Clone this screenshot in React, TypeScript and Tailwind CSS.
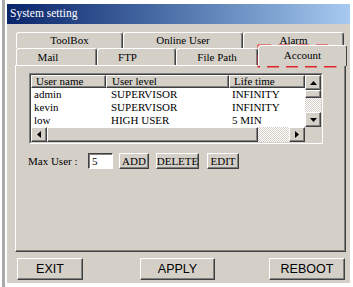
import React from "react";

const serif = "font-['Liberation_Serif',serif]";
const raised =
  "border border-t-white border-l-white border-r-[#404040] border-b-[#404040] shadow-[inset_-1px_-1px_0_#808080]";
const dither =
  "bg-[image:repeating-conic-gradient(#d4d0c8_0_25%,#ffffff_0_50%)] bg-[length:2px_2px]";

type Dir = "up" | "down" | "left" | "right";

function Arrow({ dir }: { dir: Dir }) {
  const vertical = dir === "up" || dir === "down";
  const pts = {
    up: "0,4 7,4 3.5,0",
    down: "0,0 7,0 3.5,4",
    left: "4,0 4,7 0,3.5",
    right: "0,0 0,7 4,3.5",
  }[dir];
  return (
    <svg width={vertical ? 7 : 4} height={vertical ? 4 : 7} viewBox={vertical ? "0 0 7 4" : "0 0 4 7"}>
      <polygon points={pts} fill="#000" />
    </svg>
  );
}

function ScrollBtn({ dir, className }: { dir: Dir; className: string }) {
  return (
    <div className={`flex items-center justify-center bg-[#d4d0c8] ${raised} ${className}`}>
      <Arrow dir={dir} />
    </div>
  );
}

function Tab({ label, className }: { label: string; className: string }) {
  return (
    <div
      className={`flex h-full items-center justify-center rounded-t-[3px] border-t border-l border-r border-t-white border-l-white border-r-[#404040] shadow-[inset_-1px_0_0_#808080] text-[11px] ${className}`}
    >
      {label}
    </div>
  );
}

function Btn({ label, className }: { label: string; className: string }) {
  return (
    <div className={`flex items-center justify-center bg-[#d4d0c8] ${raised} ${className}`}>{label}</div>
  );
}

const users = [
  { name: "admin", level: "SUPERVISOR", life: "INFINITY" },
  { name: "kevin", level: "SUPERVISOR", life: "INFINITY" },
  { name: "low", level: "HIGH USER", life: "5 MIN" },
];

export default function App() {
  return (
    <div className={`relative flex h-[287px] w-[353px] overflow-hidden bg-white text-black ${serif}`}>
      <div className="ml-[2px] w-[3px] bg-[#a9a9a9]" />
      <div className="ml-[2px] mt-[4px] flex h-[279px] w-[343px] flex-col bg-[#d4d0c8]">
        {/* title bar */}
        <div className="flex h-[20px] items-center bg-gradient-to-r from-[#0a246a] to-[#a6caf0] pl-[3px] text-[11.5px] text-white">
          System setting
        </div>

        <div className="pl-[8px]">
          {/* tabs */}
          <div className="mt-[8px]">
            <div className="ml-[1px] flex h-[16px]">
              <Tab label="ToolBox" className="w-[107px]" />
              <Tab label="Online User" className="w-[120px]" />
              <Tab label="Alarm" className="w-[101px]" />
            </div>
            <div className="ml-[1px] flex h-[17px] items-start">
              <Tab label="Mail" className="w-[81px] pr-[17px]" />
              <Tab label="FTP" className="w-[79px] pr-[18px]" />
              <Tab label="File Path" className="w-[82px]" />
              <div className="relative z-10 -mt-[3px] flex h-[21px] w-[89px] items-center justify-center rounded-t-[3px] border-t border-l border-r border-t-white border-l-white border-r-[#404040] bg-[#d4d0c8] pb-[2px] text-[11px]">
                Account
              </div>
            </div>
          </div>

          {/* panel */}
          <div className="h-[187px] w-[331px] border border-t-white border-l-white border-r-[#404040] border-b-[#404040] shadow-[inset_-1px_-1px_0_#808080]">
            <div className="ml-[13px] mt-[7px] h-[71px] w-[294px] border border-t-[#808080] border-l-[#808080] border-r-white border-b-white">
              <div className="grid h-full w-full grid-cols-[1fr_16px] grid-rows-[1fr_15px] border border-t-[#404040] border-l-[#404040] border-r-[#d4d0c8] border-b-[#d4d0c8] bg-white text-[11px]">
                <div className="flex flex-col">
                  <div className="flex h-[13px]">
                    <div className={`flex w-[75px] items-center bg-[#d4d0c8] pl-[4px] ${raised}`}>User name</div>
                    <div className={`flex w-[123px] items-center bg-[#d4d0c8] pl-[5px] ${raised}`}>User level</div>
                    <div className={`flex w-[76px] items-center bg-[#d4d0c8] pl-[4px] ${raised}`}>Life time</div>
                  </div>
                  {users.map((u) => (
                    <div key={u.name} className="flex h-[13px] items-center leading-none">
                      <div className="w-[75px] pl-[3px]">{u.name}</div>
                      <div className="w-[123px] pl-[5px]">{u.level}</div>
                      <div className="w-[76px] pl-[3px]">{u.life}</div>
                    </div>
                  ))}
                </div>
                <div className="flex flex-col">
                  <ScrollBtn dir="up" className="h-[15px]" />
                  <div className={`h-[8px] bg-[#d4d0c8] ${raised}`} />
                  <div className={`flex-1 ${dither}`} />
                  <ScrollBtn dir="down" className="h-[15px]" />
                </div>
                <div className="flex">
                  <ScrollBtn dir="left" className="w-[16px]" />
                  <div className={`w-[211px] bg-[#d4d0c8] ${raised}`} />
                  <div className={`flex-1 ${dither}`} />
                  <ScrollBtn dir="right" className="w-[16px]" />
                </div>
                <div className="bg-[#d4d0c8]" />
              </div>
            </div>

            <div className="ml-[12px] mt-[9px] flex h-[16px] items-center text-[11px]">
              <div className="w-[60px]">Max User :</div>
              <div className="flex h-[16px] w-[25px] items-center border border-t-[#404040] border-l-[#404040] border-r-white border-b-white bg-white pl-[3px] shadow-[inset_1px_1px_0_#808080]">
                5
              </div>
              <Btn label="ADD" className="ml-[6px] h-[16px] w-[30px]" />
              <Btn label="DELETE" className="ml-[7px] h-[16px] w-[43px]" />
              <Btn label="EDIT" className="ml-[8px] h-[16px] w-[32px]" />
            </div>
          </div>

          {/* bottom buttons */}
          <div className="mt-[6px] flex font-['Liberation_Sans',Arial,sans-serif] text-[12.5px]">
            <Btn label="EXIT" className="ml-[2px] h-[22px] w-[66px]" />
            <Btn label="APPLY" className="ml-[57px] h-[22px] w-[75px]" />
            <Btn label="REBOOT" className="ml-[54px] h-[22px] w-[76px]" />
          </div>
        </div>
      </div>

      {/* red dashed annotation around Account tab */}
      <svg className="absolute left-[257px] top-[44px]" width="80" height="24" viewBox="0 0 80 24">
        <rect x="2" y="2" width="76" height="20" fill="none" stroke="#e3232a" strokeWidth="3" strokeDasharray="12 7" />
      </svg>
    </div>
  );
}
